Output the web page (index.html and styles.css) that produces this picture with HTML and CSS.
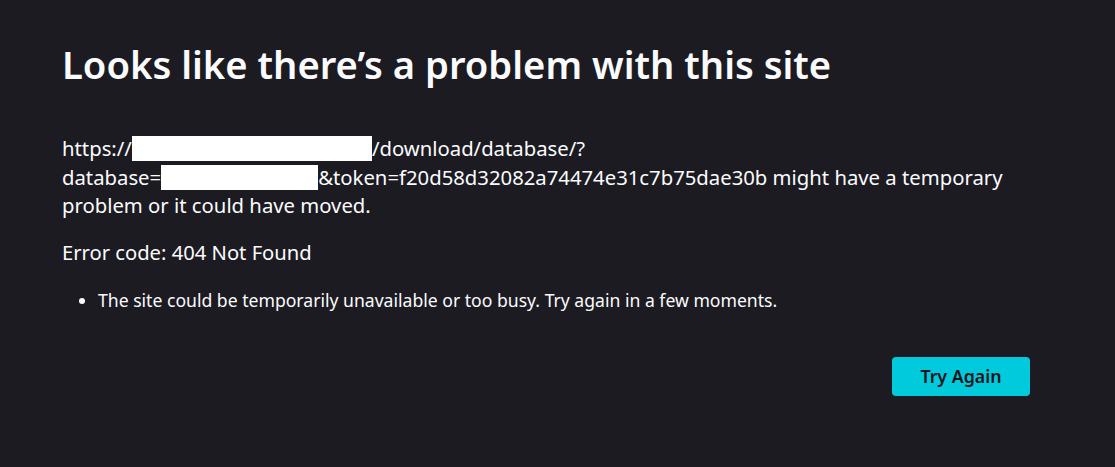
FILE: index.html
```html
<!DOCTYPE html>
<html>
<head>
<meta charset="utf-8">
<link rel="stylesheet" href="styles.css">
</head>
<body>
<main class="container">
  <h1 class="title">Looks like there’s a problem with this site</h1>
  <p class="desc">https://<span class="redact redact-host"></span>/download/database/?<br>database=<span class="redact redact-db"></span>&amp;token=f20d58d32082a74474e31c7b75dae30b might have a temporary<br>problem or it could have moved.</p>
  <p class="code">Error code: 404 Not Found</p>
  <ul class="tips">
    <li>The site could be temporarily unavailable or too busy. Try again in a few moments.</li>
  </ul>
  <div class="actions">
    <button class="btn">Try Again</button>
  </div>
</main>
</body>
</html>
```

FILE: styles.css
```css
html, body {
  margin: 0;
  padding: 0;
  background: #1c1b22;
  color: #fbfbfe;
  font-family: "Noto Sans", "Open Sans", sans-serif;
  height: 100%;
}
.container {
  width: 968px;
  padding: 40px 0 0 62px;
}
.title {
  margin: 0;
  font-size: 38.2px;
  font-weight: 600;
  line-height: 48px;
}
.desc {
  margin: 46px 0 0;
  font-size: 20.3px;
  line-height: 28.5px;
}
.redact {
  display: inline-block;
  background: #ffffff;
  height: 25px;
  vertical-align: -5px;
}
.redact-host { width: 240px; }
.redact-db { width: 157px; }
.code {
  margin: 18px 0 0;
  font-size: 20.2px;
  line-height: 28px;
}
.tips {
  margin: 22px 0 0;
  padding-left: 36px;
  font-size: 17.6px;
  line-height: 24px;
}
.actions {
  display: flex;
  justify-content: flex-end;
  margin-top: 45px;
}
.btn {
  width: 138px;
  height: 39px;
  border: none;
  border-radius: 4px;
  background: #00cadb;
  color: #15141a;
  font-family: inherit;
  font-size: 17.8px;
  font-weight: 600;
}
```
